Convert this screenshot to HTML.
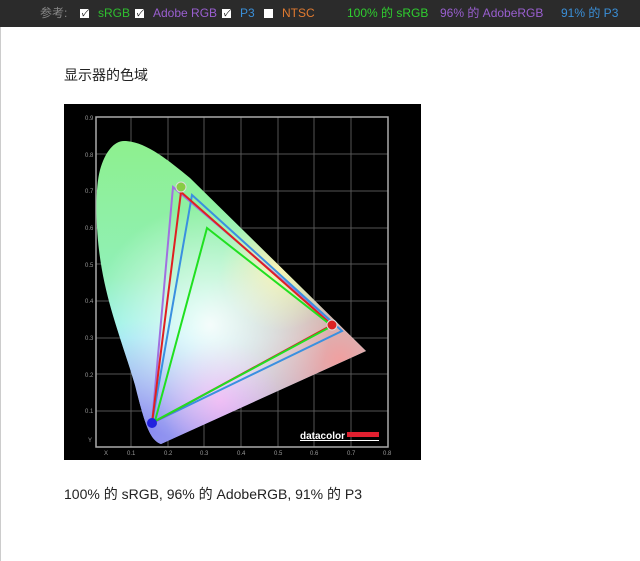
<!DOCTYPE html>
<html><head><meta charset="utf-8"><style>
body{margin:0;width:640px;height:561px;background:#fff;font-family:"Liberation Sans","Noto Sans CJK SC",sans-serif;overflow:hidden;position:relative}
.bar{position:absolute;left:0;top:0;width:640px;height:27px;background:#2b2b2b;font-size:12px;line-height:27px;white-space:nowrap}
.bar span{position:absolute;top:0}
.cb{display:inline-block;width:9px;height:9px;background:#fff;position:absolute;top:9px;font-size:9px;line-height:9px;color:#000;text-align:center}
.t{position:absolute;left:64px;font-size:14px;color:#222}
.lb{position:absolute;left:0;top:27px;width:1px;height:534px;background:#ccc}
</style></head><body>
<div class="bar">
<span style="left:40px;color:#888">参考:</span>
<i class="cb" style="left:80px">✓</i><span style="left:98px;color:#2fbf2f">sRGB</span>
<i class="cb" style="left:135px">✓</i><span style="left:153px;color:#9a5fd0">Adobe RGB</span>
<i class="cb" style="left:222px">✓</i><span style="left:240px;color:#3a8fd8">P3</span>
<i class="cb" style="left:264px"></i><span style="left:282px;color:#e07a30">NTSC</span>
<span style="left:347px;color:#2fcf2f">100% 的 sRGB</span>
<span style="left:440px;color:#9a5fd0">96% 的 AdobeRGB</span>
<span style="left:561px;color:#3a8fd8">91% 的 P3</span>
</div>
<div class="lb"></div>
<div class="t" style="top:65px">显示器的色域</div>
<svg style="position:absolute;left:0;top:0" width="640" height="561">
<defs>
<clipPath id="hs"><path d="M161,444 C150,440 145,425 135,385 C120,335 105,300 99,250 C95,215 96,185 100,170 C105,152 114,141 124,141 C145,141 168,160 190,178 L366,351 Z"/></clipPath>
<radialGradient id="w" cx="210" cy="325" r="120" gradientUnits="userSpaceOnUse"><stop offset="0" stop-color="#fff" stop-opacity=".9"/><stop offset="1" stop-color="#fff" stop-opacity="0"/></radialGradient>
<radialGradient id="pk" cx="340" cy="360" r="150" gradientUnits="userSpaceOnUse"><stop offset="0" stop-color="#f0a0a0"/><stop offset="1" stop-color="#f0a0a0" stop-opacity="0"/></radialGradient>
<radialGradient id="bl" cx="150" cy="430" r="110" gradientUnits="userSpaceOnUse"><stop offset="0" stop-color="#8a8cf0"/><stop offset="1" stop-color="#a0a0f0" stop-opacity="0"/></radialGradient>
<radialGradient id="mg" cx="220" cy="400" r="60" gradientUnits="userSpaceOnUse"><stop offset="0" stop-color="#e8a0f0"/><stop offset="1" stop-color="#e8a0f0" stop-opacity="0"/></radialGradient>
<radialGradient id="ye" cx="280" cy="270" r="60" gradientUnits="userSpaceOnUse"><stop offset="0" stop-color="#f5f0a0"/><stop offset="1" stop-color="#f5f0a0" stop-opacity="0"/></radialGradient>
<linearGradient id="g" x1="0" y1="141" x2="0" y2="444" gradientUnits="userSpaceOnUse"><stop offset="0" stop-color="#8ef08e"/><stop offset=".45" stop-color="#90f0b8"/><stop offset=".65" stop-color="#90f0f0"/><stop offset="1" stop-color="#a0a0f0"/></linearGradient>
</defs>
<rect x="64" y="104" width="357" height="356" fill="#000"/>
<g stroke="#555" stroke-width="1">
<path d="M131,117V447M168,117V447M204,117V447M241,117V447M278,117V447M314,117V447M351,117V447M96,154H388M96,191H388M96,228H388M96,264H388M96,301H388M96,338H388M96,374H388M96,411H388"/>
</g>
<rect x="96" y="117" width="292" height="330" fill="none" stroke="#aaa" stroke-width="1.5"/>
<g clip-path="url(#hs)">
<rect x="90" y="130" width="290" height="320" fill="url(#g)"/>
<rect x="90" y="130" width="290" height="320" fill="url(#pk)"/>
<rect x="90" y="130" width="290" height="320" fill="url(#bl)"/>
<rect x="90" y="130" width="290" height="320" fill="url(#mg)"/>
<rect x="90" y="130" width="290" height="320" fill="url(#ye)"/>
<rect x="90" y="130" width="290" height="320" fill="url(#w)"/>
</g>
<g fill="none" stroke-width="2">
<path d="M173,187L334,324L152,423Z" stroke="#a070e0"/>
<path d="M192,195L342,331L152,423Z" stroke="#3a90e0"/>
<path d="M181,192L332,325L152,423Z" stroke="#e02020"/>
<path d="M207,228L332,326L155,421Z" stroke="#20e020"/>
</g>
<circle cx="181" cy="187" r="5" fill="#8c4" stroke="#ddd"/>
<circle cx="332" cy="325" r="5" fill="#d22" stroke="#ddd"/>
<circle cx="152" cy="423" r="5" fill="#22d"/>
<g fill="#999" font-size="6" font-family="Liberation Sans">
<text x="85" y="120">0.9</text><text x="85" y="157">0.8</text><text x="85" y="193">0.7</text><text x="85" y="230">0.6</text><text x="85" y="267">0.5</text><text x="85" y="303">0.4</text><text x="85" y="340">0.3</text><text x="85" y="377">0.2</text><text x="85" y="413">0.1</text><text x="88" y="442">Y</text>
<text x="104" y="455">X</text><text x="127" y="455">0.1</text><text x="164" y="455">0.2</text><text x="200" y="455">0.3</text><text x="237" y="455">0.4</text><text x="274" y="455">0.5</text><text x="310" y="455">0.6</text><text x="347" y="455">0.7</text><text x="383" y="455">0.8</text>
</g>
<text x="300" y="439" fill="#fff" font-size="10" font-weight="bold" font-family="Liberation Sans">datacolor</text>
<rect x="347" y="432" width="32" height="5" fill="#e02030"/>
<rect x="300" y="440" width="79" height="1" fill="#fff"/>
</svg>
<div class="t" style="top:484px">100% 的 sRGB, 96% 的 AdobeRGB, 91% 的 P3</div>
</body></html>
